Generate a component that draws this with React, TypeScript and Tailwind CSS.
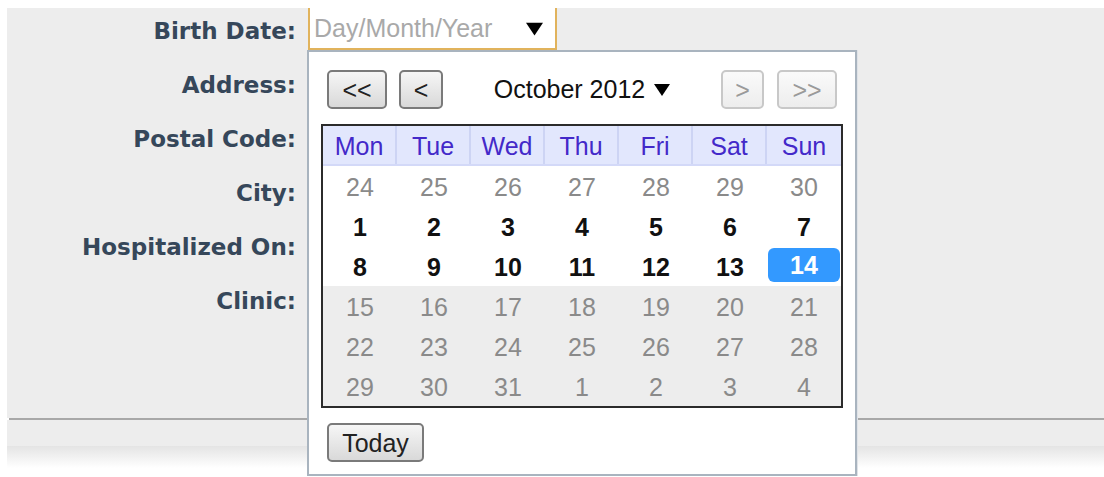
import type { ReactNode } from 'react';

type DayCell = { day: number; kind: 'other' | 'current' | 'today' | 'later' };

const labels = ['Birth Date:', 'Address:', 'Postal Code:', 'City:', 'Hospitalized On:', 'Clinic:'];
const weekDays = ['Mon', 'Tue', 'Wed', 'Thu', 'Fri', 'Sat', 'Sun'];

// October 2012, weeks starting on Monday, today = 14
const buildWeeks = (): DayCell[][] => {
  const cells: DayCell[] = [];
  for (let d = 24; d <= 30; d++) cells.push({ day: d, kind: 'other' });
  for (let d = 1; d <= 31; d++) {
    cells.push({ day: d, kind: d < 14 ? 'current' : d === 14 ? 'today' : 'later' });
  }
  for (let d = 1; d <= 4; d++) cells.push({ day: d, kind: 'later' });
  const weeks: DayCell[][] = [];
  for (let i = 0; i < cells.length; i += 7) weeks.push(cells.slice(i, i + 7));
  return weeks;
};

const Caret = ({ w, h }: { w: number; h: number }) => (
  <svg width={w} height={h} viewBox="0 0 16 12" className="shrink-0">
    <polygon points="0,0 16,0 8,12" fill="#000" />
  </svg>
);

const NavButton = ({ children, width, disabled }: { children: ReactNode; width: string; disabled?: boolean }) => (
  <button
    className={
      disabled
        ? `${width} h-[39px] pt-[2px] rounded-[5px] border-2 border-[#c8c8c8] bg-linear-to-b from-[#fafafa] to-[#ededed] text-[25px] leading-none text-[#9a9a9a]`
        : `${width} h-[39px] pt-[2px] rounded-[5px] border-2 border-[#7a7a7a] bg-linear-to-b from-[#f6f6f6] to-[#d9d9d9] text-[25px] leading-none text-[#222]`
    }
  >
    {children}
  </button>
);

const DayView = ({ cell }: { cell: DayCell }) => {
  if (cell.kind === 'today') {
    return (
      <div className="h-[40px] pt-[2px] pb-[4px] px-[1px]">
        <div className="h-full pt-[2px] rounded-[6px] bg-[#3399ff] flex items-center justify-center font-bold text-white">
          {cell.day}
        </div>
      </div>
    );
  }
  return (
    <div
      className={
        cell.kind === 'current'
          ? 'h-[40px] pt-[4px] flex items-center justify-center font-bold text-[#111]'
          : 'h-[40px] pt-[4px] flex items-center justify-center text-[#8a8a8a]'
      }
    >
      {cell.day}
    </div>
  );
};

const DatePicker = () => {
  const weeks = buildWeeks();
  return (
    <div className="absolute left-[300px] top-[42px] w-[550px] h-[426px] bg-white border-2 border-[#a9b4bf] shadow-[1px_0_0_#dfe3e8]">
      <div className="flex items-center px-[18px] pt-[18px]">
        <NavButton width="w-[60px]">&lt;&lt;</NavButton>
        <div className="w-[12px]" />
        <NavButton width="w-[44px]">&lt;</NavButton>
        <div className="flex-1 flex items-center justify-center text-[25px] text-[#111]">
          <span>October 2012</span>
          <span className="ml-[9px]">
            <Caret w={16} h={12} />
          </span>
        </div>
        <NavButton width="w-[43px]" disabled>&gt;</NavButton>
        <div className="w-[13px]" />
        <NavButton width="w-[60px]" disabled>&gt;&gt;</NavButton>
      </div>

      <div className="mx-[12px] mt-[15px] border-2 border-[#2b2b2b] text-[25px]">
        <div className="grid grid-cols-7 bg-[#e2e7fd] border-b-2 border-[#d3d9f8]">
          {weekDays.map((d, i) => (
            <div
              key={d}
              className={
                i < 6
                  ? 'h-[38px] pt-[4px] flex items-center justify-center text-[#4329c9] border-r-2 border-[#cdd4f4]'
                  : 'h-[38px] pt-[4px] flex items-center justify-center text-[#4329c9]'
              }
            >
              {d}
            </div>
          ))}
        </div>
        {weeks.map((week, wi) => (
          <div key={wi} className={wi < 3 ? 'grid grid-cols-7 bg-white' : 'grid grid-cols-7 bg-[#ededed]'}>
            {week.map((cell, ci) => (
              <DayView key={ci} cell={cell} />
            ))}
          </div>
        ))}
      </div>

      <div className="px-[18px] mt-[15px]">
        <NavButton width="w-[97px]">Today</NavButton>
      </div>
    </div>
  );
};

export default function App() {
  return (
    <div className="min-h-screen bg-white pt-[8px] pl-[7px] font-['Liberation_Sans',Arial,sans-serif]">
      <div className="relative">
        <div className="bg-[#ededed] h-[410px] flex">
          <div className="w-[289px] -mt-[4px] flex flex-col items-end">
            {labels.map((l) => (
              <div
                key={l}
                className="h-[54px] flex items-center font-['DejaVu_Sans',Verdana,sans-serif] font-bold text-[23px] text-[#36475a]"
              >
                {l}
              </div>
            ))}
          </div>
          <div className="ml-[12px]">
            <div className="w-[249px] h-[42px] bg-white border-x-2 border-b-2 border-[#e1b35c] flex items-center pl-[4px] pr-[12px] pt-[2px]">
              <span className="text-[25px] text-[#a9a9a9]">Day/Month/Year</span>
              <span className="ml-auto">
                <Caret w={17} h={14} />
              </span>
            </div>
          </div>
        </div>
        <div className="h-[2px] ml-[2px] bg-[#a8a8a8]" />
        <div className="h-[26px] bg-[#ededed]" />
        <div className="h-[22px] bg-linear-to-b from-[#e4e4e4] to-white" />
        <DatePicker />
      </div>
    </div>
  );
}
